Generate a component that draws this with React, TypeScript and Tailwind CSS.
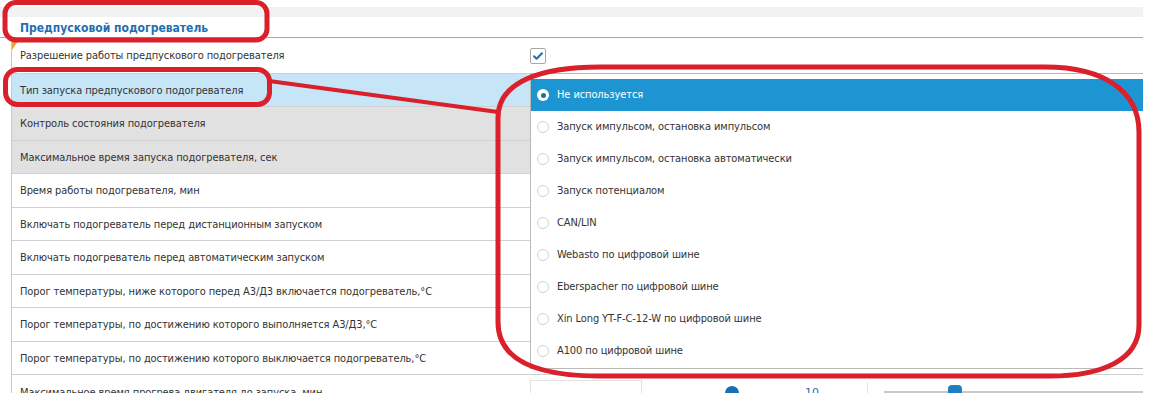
import React from "react";

const rows = [
  { label: "Разрешение работы предпускового подогревателя", tone: "white", h: "h-[35.5px]", check: true },
  { label: "Тип запуска предпускового подогревателя", tone: "blue", h: "h-[33.5px]" },
  { label: "Контроль состояния подогревателя", tone: "gray", h: "h-[33.5px]" },
  { label: "Максимальное время запуска подогревателя, сек", tone: "gray", h: "h-[33.5px]" },
  { label: "Время работы подогревателя, мин", tone: "white", h: "h-[33.5px]" },
  { label: "Включать подогреватель перед дистанционным запуском", tone: "white", h: "h-[33.5px]" },
  { label: "Включать подогреватель перед автоматическим запуском", tone: "white", h: "h-[33.5px]" },
  { label: "Порог температуры, ниже которого перед А3/Д3 включается подогреватель,°C", tone: "white", h: "h-[33.5px]" },
  { label: "Порог температуры, по достижению которого выполняется А3/Д3,°C", tone: "white", h: "h-[33.5px]" },
  { label: "Порог температуры, по достижению которого выключается подогреватель,°C", tone: "white", h: "h-[33.5px]" },
];

const options = [
  "Не используется",
  "Запуск импульсом, остановка импульсом",
  "Запуск импульсом, остановка автоматически",
  "Запуск потенциалом",
  "CAN/LIN",
  "Webasto по цифровой шине",
  "Eberspacher по цифровой шине",
  "Xin Long YT-F-C-12-W по цифровой шине",
  "A100 по цифровой шине",
];

function toneClass(tone: string) {
  if (tone === "blue") return "bg-[#c6e5f7]";
  if (tone === "gray") return "bg-[#e1e1e1]";
  return "bg-white";
}

function Checkbox() {
  return (
    <div className="w-[16px] h-[16px] rounded-[2px] border border-[#a8a8a8] bg-white flex items-center justify-center">
      <svg width="12" height="12" viewBox="0 0 12 12" fill="none">
        <path d="M2 6.2l2.6 2.6L10 3.2" stroke="#1f6fb2" strokeWidth="2" strokeLinecap="round" strokeLinejoin="round" />
      </svg>
    </div>
  );
}

function Dropdown() {
  return (
    <div className="absolute left-[518px] top-[35px] w-[613px] h-[296px] bg-white border-l border-t border-b border-[#b9b9b9] pt-[5px]">
      {options.map((opt, i) => {
        const active = i === 0;
        return (
          <div
            key={opt}
            className={
              "h-[32px] flex items-center gap-[8px] pl-[6px] " +
              (active ? "bg-[#1e95d3] text-white" : "text-[#333]")
            }
          >
            {active ? (
              <div className="w-[12px] h-[12px] rounded-full bg-white flex items-center justify-center">
                <div className="w-[5px] h-[5px] rounded-full bg-[#1a6fae]" />
              </div>
            ) : (
              <div className="w-[12px] h-[12px] rounded-full border border-[#d2d2d2] bg-white" />
            )}
            <span className="text-[11px] font-stretch-condensed tracking-[-0.1px]">{opt}</span>
          </div>
        );
      })}
    </div>
  );
}

function Annotations() {
  return (
    <svg className="absolute inset-0 pointer-events-none" width="1152" height="393" viewBox="0 0 1152 393" fill="none">
      <rect x="5" y="2.5" width="262" height="37.5" rx="11" stroke="#d9202b" strokeWidth="5" />
      <rect x="5.5" y="69.5" width="264" height="35" rx="12" stroke="#d9202b" strokeWidth="5" />
      <path d="M269 81 L498 112" stroke="#d9202b" strokeWidth="4" />
      <path
        d="M498 118 C498 82 540 67 600 67 L1045 67 C1105 67 1139 92 1139 132 L1139 325 C1139 360 1102 376 1050 376 L600 376 C540 376 498 362 498 322 Z"
        stroke="#d9202b"
        strokeWidth="5"
      />
    </svg>
  );
}

export default function App() {
  return (
    <div
      className="relative w-[1152px] h-[393px] overflow-hidden bg-white text-[#333]"
      style={{ fontFamily: '"DejaVu Sans", Verdana, sans-serif' }}
    >
      <div className="pt-[7px]">
        <div className="h-[10px] w-[1143px] bg-[#f2f2f2]" />
      </div>
      <div className="w-[1143px] h-[21px] border-b border-[#a9a9a9] pl-[20px] flex items-center pt-[2px]">
        <span className="text-[12px] font-bold font-stretch-condensed text-[#1f6fb2]">Предпусковой подогреватель</span>
      </div>

      <div className="relative ml-[11px] w-[1132px] border-l border-[#c9c9c9]">
        {/* orange marker in the corner */}
        <div className="absolute left-0 top-0 w-0 h-0 border-t-[12px] border-t-[#f0a032] border-r-[8px] border-r-transparent" />
        {rows.map((r) => (
          <div key={r.label} className={"flex items-center border-b border-[#d0d0d0] pt-[2px] " + r.h + " " + toneClass(r.tone)}>
            <div className="w-[518px] pl-[8px] text-[11px] font-stretch-condensed tracking-[-0.1px] whitespace-nowrap">{r.label}</div>
            <div className="flex-1 flex items-center">{r.check && <Checkbox />}</div>
          </div>
        ))}
        <div className="flex items-center h-[33.5px] pt-[2px]">
          <div className="w-[518px] pl-[8px] text-[11px] font-stretch-condensed tracking-[-0.1px] whitespace-nowrap">
            Максимальное время прогрева двигателя до запуска, мин
          </div>
          <div className="flex-1 flex items-center">
            <div className="w-[112px] h-[26px] border border-[#e2e2e2] bg-white" />
            <div className="ml-[83px] w-[14px] h-[14px] rounded-full bg-[#1a6fae]" />
            <span className="ml-[66px] text-[11px] text-[#1f6fb2]">10</span>
            <div className="ml-[48px] w-px h-[22px] bg-[#e2e2e2]" />
            <div className="relative ml-[16px] flex-1 h-[3px] bg-[#c8c8c8]">
              <div className="absolute left-[64px] top-[-6px] w-[14px] h-[14px] rounded-[4px] bg-[#1e7fc4]" />
            </div>
          </div>
        </div>
        <Dropdown />
      </div>

      <Annotations />
    </div>
  );
}
